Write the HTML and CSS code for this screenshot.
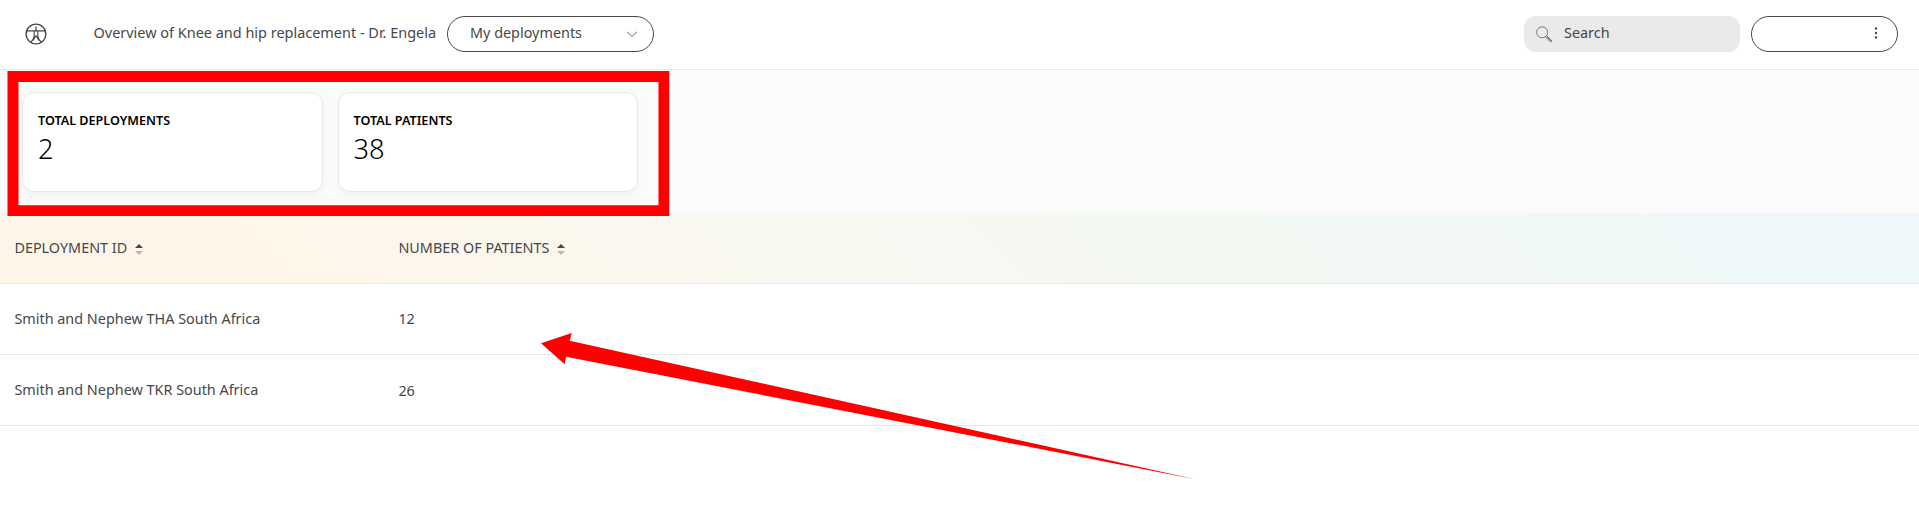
FILE: index.html
```html
<!DOCTYPE html>
<html lang="en">
<head>
<meta charset="utf-8">
<title>Overview</title>
<link rel="stylesheet" href="styles.css">
</head>
<body>
<header class="topbar">
  <svg class="access" width="22" height="22" viewBox="0 0 22 22" fill="none" stroke="#46474b" stroke-width="1.4">
    <circle cx="11" cy="11" r="9.9"/>
    <path d="M1.6 7.8H20.4M11 3.5V8" stroke-width="1.3"/>
    <path d="M9.2 8V12.8Q8.6 16.8 5.7 19.2M12.8 8V12.8Q13.4 16.8 16.3 19.2M8 17.4L11 12.8L14 17.4" stroke-width="1.1"/>
  </svg>
  <h1 class="title">Overview of Knee and hip replacement - Dr. Engela</h1>
  <button class="pill select"><span>My deployments</span>
    <svg width="12" height="8" viewBox="0 0 12 8" fill="none" stroke="#46474b" stroke-width=".8"><path d="M.9 1.8L6 6.4L11.1 1.8"/></svg>
  </button>
  <div class="search">
    <svg width="17" height="17" viewBox="0 0 17 17" fill="none" stroke="#5c5d60" stroke-width=".8">
      <circle cx="6.1" cy="6.3" r="5.5"/><path d="M9.6 10.5L10.5 9.6L15.9 14.9L14.7 16.1L9.5 10.9M10.8 10.9L15.2 15.3"/>
    </svg>
    <span>Search</span>
  </div>
  <button class="pill account" aria-label="Account">
    <svg width="4" height="12" viewBox="0 0 4 12" fill="#46474b"><circle cx="2" cy="1.5" r="1.2"/><circle cx="2" cy="6" r="1.2"/><circle cx="2" cy="10.5" r="1.2"/></svg>
  </button>
</header>
<section class="summary">
  <article class="card"><h2 class="label">TOTAL DEPLOYMENTS</h2><p class="value">2</p></article>
  <article class="card"><h2 class="label">TOTAL PATIENTS</h2><p class="value">38</p></article>
</section>
<main class="table">
  <div class="row head">
    <div class="cell">DEPLOYMENT ID <svg class="sort" width="8" height="11" viewBox="0 0 8 11"><path d="M0 4L4 0L8 4Z" fill="#46474b"/><path d="M0 7L4 11L8 7Z" fill="#bbbab7"/></svg></div>
    <div class="cell">NUMBER OF PATIENTS <svg class="sort" width="8" height="11" viewBox="0 0 8 11"><path d="M0 4L4 0L8 4Z" fill="#46474b"/><path d="M0 7L4 11L8 7Z" fill="#bbbab7"/></svg></div>
  </div>
  <div class="row"><div class="cell">Smith and Nephew THA South Africa</div><div class="cell">12</div></div>
  <div class="row"><div class="cell">Smith and Nephew TKR South Africa</div><div class="cell number-low">26</div></div>
</main>
<svg class="markup" width="1919" height="507" viewBox="0 0 1919 507" fill="#f00">
  <path fill-rule="evenodd" d="M7.5 71H669.3V216H7.5ZM18.5 82V205.2H658.5V82Z"/>
  <path d="M541 343.2L571.7 333L569.7 340.8L1195 479.2L566 356.8L564.7 364.2Z"/>
</svg>
</body>
</html>
```
FILE: styles.css
```css
* { box-sizing: border-box; }
body {
  position: relative;
  margin: 0;
  height: 507px;
  overflow: hidden;
  background: #fff;
  color: #46474b;
  font: 14.4px/20px "Noto Sans", sans-serif;
}
h1, h2, p { margin: 0; font: inherit; }
button { font: inherit; color: inherit; background: #fff; }
svg { display: block; flex: none; }
.topbar {
  display: flex;
  align-items: center;
  height: 70px;
  padding: 0 21px 2px 25px;
  border-bottom: 1px solid #e8e8e8;
}
.access { margin-right: 46.5px; }
.title { width: 353.5px; padding-bottom: 2px; font-size: 14.46px; white-space: nowrap; }
.pill {
  display: flex;
  align-items: center;
  justify-content: space-between;
  height: 36px;
  border: 1px solid #46474b;
  border-radius: 18px;
}
.select { width: 207px; padding: 0 15px 0 22px; }
.topbar span { padding-bottom: 2px; }
.search {
  display: flex;
  align-items: center;
  gap: 11px;
  width: 216px;
  height: 36px;
  margin-left: auto;
  padding-left: 12px;
  border-radius: 12px;
  background: #eaeaea;
}
.search svg { margin-top: 2px; }
.account { width: 147px; margin-left: 11px; justify-content: flex-end; padding: 0 19px 2px 0; }
.summary {
  display: flex;
  gap: 15px;
  height: 143px;
  padding: 22px;
  background: #fbfbfb;
}
.card {
  width: 300.5px;
  height: 100px;
  padding: 18px 15px;
  border: 1px solid #e9e9e9;
  border-radius: 12px;
  background: #fff;
  box-shadow: 0 3px 6px rgba(0, 0, 0, .045);
  color: #000;
}
.label { font-size: 12.6px; font-weight: 600; line-height: 20px; }
.value { font-size: 27.2px; font-weight: 300; line-height: 35px; }
.row {
  display: grid;
  grid-template-columns: 384px 1fr;
  height: 71px;
  padding-left: 14.4px;
  align-items: center;
  border-bottom: 1px solid #e8e8e8;
}
.head { background: linear-gradient(45deg, #fff6e9 15%, #f9f8f0 38%, #f3f8f3 66%, #eef8fa 96%); }
.cell { display: flex; align-items: center; gap: 8px; }
.head .cell { padding-bottom: 1px; }
.sort { margin-top: 3px; }
.number-low { padding-top: 1px; }
.markup { position: absolute; top: 0; left: 0; pointer-events: none; }
```
